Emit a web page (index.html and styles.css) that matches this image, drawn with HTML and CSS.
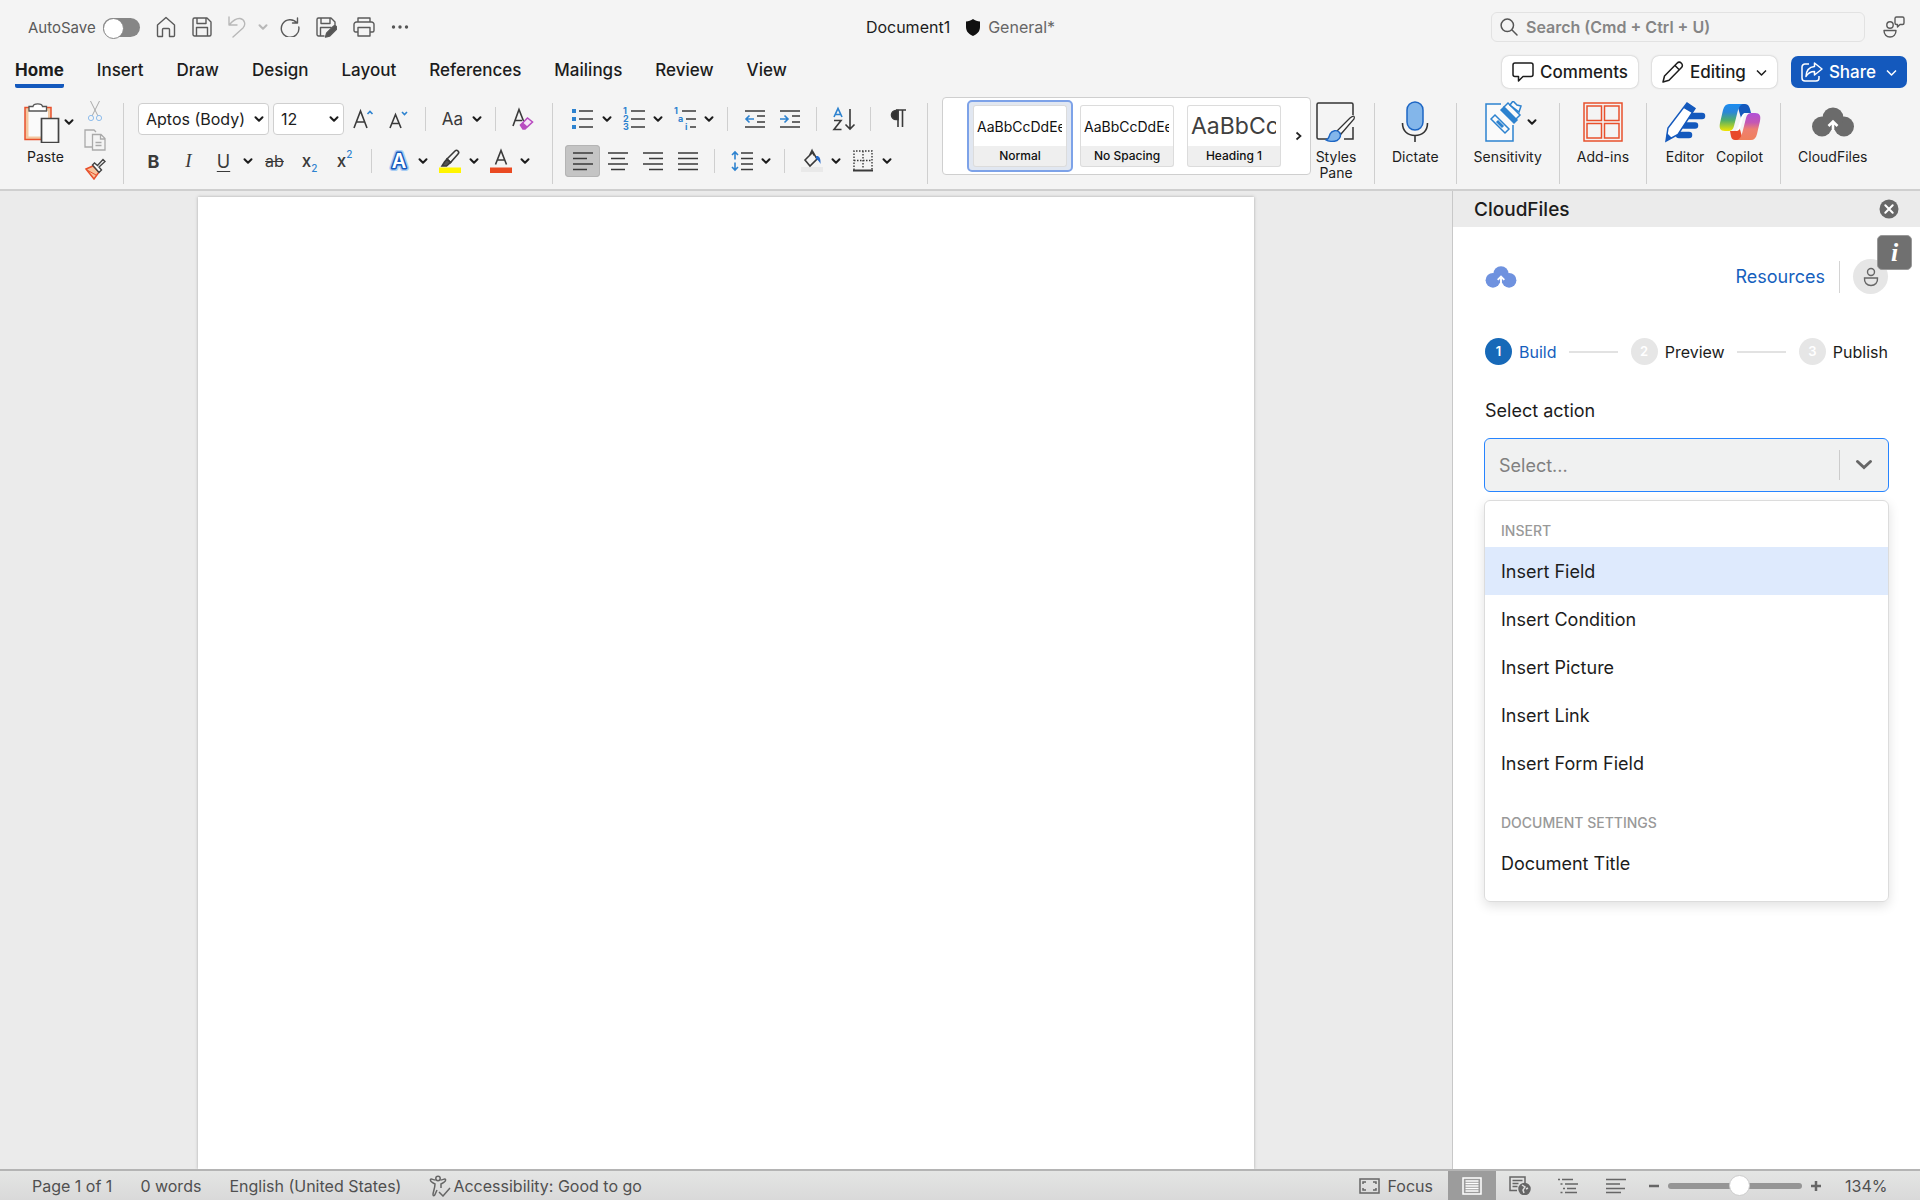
FILE: index.html
```html
<!DOCTYPE html>
<html lang="en">

<head>
    <meta charset="UTF-8">
    <meta name="viewport" content="width=device-width, initial-scale=1.0">
    <title>Document1</title>
    <link rel="stylesheet" href="styles.css">
</head>

<body>
    <svg class="defs" aria-hidden="true">
        <symbol id="caret" viewBox="0 0 10 10"><path d="M1.500 3.200 5 6.800 8.500 3.200" fill="none" stroke="currentColor" stroke-width="2" stroke-linecap="round" stroke-linejoin="round"/></symbol>
        <symbol id="cloud" viewBox="0 0 42 30">
            <g fill="currentColor"><circle cx="10" cy="19.500" r="10"/><circle cx="32" cy="19.500" r="10"/><circle cx="21" cy="11" r="10.500"/><rect x="12" y="12" width="18" height="11"/></g>
            <path class="cloud-arrow" d="M21 24V15M16.500 19 21 14.500 25.500 19" fill="none" stroke-width="2.600"/>
        </symbol>
    </svg>

    <header class="titlebar">
        <div class="quick">
            <label for="autosave">AutoSave</label>
            <input type="checkbox" id="autosave" class="toggle">
            <button aria-label="Home"><svg width="20" height="22" viewBox="0 0 20 22"><path d="M1.500 9 10 1.500 18.500 9v10.500a1 1 0 0 1-1 1h-4v-7a1 1 0 0 0-1-1h-5a1 1 0 0 0-1 1v7h-4a1 1 0 0 1-1-1z"/></svg></button>
            <button aria-label="Save"><svg width="20" height="20" viewBox="0 0 20 20"><path d="M1 2.500A1.500 1.500 0 0 1 2.500 1H15l4 4v12.500a1.500 1.500 0 0 1-1.500 1.500h-15A1.500 1.500 0 0 1 1 17.500zM5 1v5.500h9V1M4.500 19v-8.500h11V19"/></svg></button>
            <button aria-label="Undo" class="off"><svg width="18" height="22" viewBox="0 0 18 22"><path d="M1 1v8h8M1.500 8.500C5 4.500 8 2 12 2.500c5 .8 6 6.500 3 9.500L5 21"/></svg></button>
            <button aria-label="Undo history" class="off slim"><svg width="10" height="10"><use href="#caret"/></svg></button>
            <button aria-label="Redo"><svg width="20" height="20" viewBox="0 0 20 20"><path d="M17.500 1v5h-5M17 6A8.800 8.800 0 1 0 18.800 10"/></svg></button>
            <button aria-label="Save as"><svg width="21" height="21" viewBox="0 0 21 21"><path d="M8 19H2.500A1.500 1.500 0 0 1 1 17.500v-15A1.500 1.500 0 0 1 2.500 1H15l4 4v4M5 1v5.500h9V1M4.500 19v-8.500H15"/><path d="m9.500 20 1.200-4 6.500-6.500a2 2 0 0 1 3 3L13.700 19z" fill="#555"/></svg></button>
            <button aria-label="Print"><svg width="22" height="20" viewBox="0 0 22 20"><path d="M5 5V1h12v4M5 15H2.500A1.500 1.500 0 0 1 1 13.500v-6A2.500 2.500 0 0 1 3.500 5h15A2.500 2.500 0 0 1 21 7.500v6a1.500 1.500 0 0 1-1.500 1.500H17M5 10.500h12V19H5z"/></svg></button>
            <button aria-label="More"><svg width="18" height="6" viewBox="0 0 18 6"><g fill="#555" stroke="none"><circle cx="2.500" cy="3" r="1.700"/><circle cx="9" cy="3" r="1.700"/><circle cx="15.500" cy="3" r="1.700"/></g></svg></button>
        </div>
        <div class="doc-name">
            <span>Document1</span>
            <svg width="14" height="17" viewBox="0 0 14 17"><path d="M7 0c2 1.800 4.500 2.200 7 2.400V8c0 4.500-3 7.300-7 9-4-1.700-7-4.500-7-9V2.400C2.500 2.200 5 1.800 7 0z" fill="#111"/></svg>
            <span class="muted">General*</span>
        </div>
        <div class="find">
            <div class="search">
                <svg width="18" height="18" viewBox="0 0 18 18"><path d="m11.800 11.800 5.200 5.200M13.500 7.300a6.200 6.200 0 1 1-12.400 0 6.200 6.200 0 0 1 12.400 0z" fill="none" stroke="#555" stroke-width="1.500" stroke-linecap="round"/></svg>
                <input type="search" placeholder="Search (Cmd + Ctrl + U)" aria-label="Search">
            </div>
            <button aria-label="Feedback"><svg width="22" height="22" viewBox="0 0 22 22"><circle cx="7" cy="9" r="3.200"/><path d="M1 14.500h12c0 4-2.500 6.500-6 6.500s-6-2.500-6-6.500zM13.500 1h6A1.500 1.500 0 0 1 21 2.500V7a1.500 1.500 0 0 1-1.500 1.500H17L14.500 11V8.500h-1A1.500 1.500 0 0 1 12 7V2.500A1.500 1.500 0 0 1 13.500 1z"/></svg></button>
        </div>
    </header>

    <nav class="tabs">
        <a href="#" class="active">Home</a>
        <a href="#">Insert</a>
        <a href="#">Draw</a>
        <a href="#">Design</a>
        <a href="#">Layout</a>
        <a href="#">References</a>
        <a href="#">Mailings</a>
        <a href="#">Review</a>
        <a href="#">View</a>
        <div class="tab-actions">
            <button class="pill"><svg width="22" height="20" viewBox="0 0 22 20"><path d="M3 1h16a2 2 0 0 1 2 2v9.500a2 2 0 0 1-2 2h-8L6.500 19v-4.500H3a2 2 0 0 1-2-2V3a2 2 0 0 1 2-2z"/></svg>Comments</button>
            <button class="pill"><svg width="22" height="22" viewBox="0 0 22 22"><path d="m1 21 1.500-6L15 2.300a3 3 0 0 1 4.500 4.300L7 19.300zM13 4.500l4.500 4.500"/></svg>Editing<svg class="chev" width="11" height="11" viewBox="0 0 11 11"><path d="m1 3.500 4.500 4.500L10 3.500"/></svg></button>
            <button class="pill share"><svg width="22" height="20" viewBox="0 0 22 20"><path d="M8 2H4a3 3 0 0 0-3 3v11a3 3 0 0 0 3 3h11a3 3 0 0 0 3-3v-2M13.500 1 21 7l-7.500 6V9.500C9.500 9.500 7 11 5 14.500 5.200 9 8 5 13.500 4.500z"/></svg>Share<svg class="chev" width="11" height="11" viewBox="0 0 11 11"><path d="m1 3.500 4.500 4.500L10 3.500"/></svg></button>
        </div>
    </nav>

    <div class="ribbon">
        <section class="group clipboard">
            <button class="big">
                <span class="big-icon">
                    <svg width="38" height="42" viewBox="0 0 38 42"><path d="M3 6.500h26v32H3z" fill="#f3c7a0" stroke="#e8502c" stroke-width="1.500"/><path d="M6.500 10H26v25.500H6.500z" fill="#fafafa"/><path d="M7 10V5.500h4C11.500 2 20 2 20.500 5.500h4V10z" fill="#fff" stroke="#555" stroke-width="1.300"/><path d="M19.500 17.500h17v24h-17z" fill="#fafafa" stroke="#444" stroke-width="1.700"/></svg>
                    <svg width="10" height="10"><use href="#caret"/></svg>
                </span>
                Paste
            </button>
            <div class="clip-tools">
                <button aria-label="Cut"><svg width="16" height="22" viewBox="0 0 16 22"><path d="M3.500 1 11 16M12.500 1 5 16" stroke="#aaa"/><circle cx="4" cy="18" r="2.600" stroke="#8fbdec"/><circle cx="12" cy="18" r="2.600" stroke="#8fbdec"/></svg></button>
                <button aria-label="Copy"><svg width="22" height="22" viewBox="0 0 22 22"><path d="M8 18H1V1h9l2 2M8.500 5.500H17l4 4V21H8.500zM16.500 5.500V10H21M11.500 13.500h6M11.500 16.500h6" stroke="#aaa" stroke-width="1.300"/></svg></button>
                <button aria-label="Format painter"><svg width="22" height="22" viewBox="0 0 22 22"><path d="m2 11 7-3 6 6-5 7z" fill="#f6c39c" stroke="#e8502c" stroke-width="1.500"/><path d="m3 12 9 5" stroke="#e8502c"/><path d="m8.500 7 2-2 3 2.500L19 1.500l2 2-6 5.500 2.500 3-2.500 2.500z" fill="#fafafa" stroke="#444" stroke-width="1.400"/></svg></button>
            </div>
        </section>

        <section class="group">
            <div class="tool-rows">
                <div class="row">
                    <span class="combo font-name"><select aria-label="Font"><option>Aptos (Body)</option></select><svg width="10" height="10"><use href="#caret"/></svg></span>
                    <span class="combo font-size"><select aria-label="Font size"><option>12</option></select><svg width="10" height="10"><use href="#caret"/></svg></span>
                    <button class="tool" aria-label="Grow font"><svg width="21" height="22" viewBox="0 0 21 22"><path d="M1 20 7.500 3 14 20M3.500 14h8"/><path class="blue" d="m14.500 6 2.500-2.500L19.500 6"/></svg></button>
                    <button class="tool" aria-label="Shrink font"><svg width="21" height="22" viewBox="0 0 21 22"><path d="M2 20 7.500 6.500 13 20M4 15.500h7"/><path class="blue" d="m14 4 2.500 2.500L19 4"/></svg></button>
                    <i class="sep"></i>
                    <button class="tool case">Aa</button>
                    <button class="drop" aria-label="Case options"><svg width="10" height="10"><use href="#caret"/></svg></button>
                    <i class="sep"></i>
                    <button class="tool" aria-label="Clear formatting"><svg width="22" height="22" viewBox="0 0 22 22"><path d="M1 18 7 1.500 11.500 13M3 12.500h7"/><path d="m8.500 17 7-7 5 4-7.500 7H11z" fill="#f7e4f8" stroke="#b84cc0" stroke-width="1.600"/><path d="m8.500 17 2.500-2.500 4.500 4-2.500 2.500h-2z" fill="#b84cc0" stroke="none"/></svg></button>
                </div>
                <div class="row">
                    <button class="tool bold">B</button>
                    <button class="tool italic">I</button>
                    <button class="tool underline">U</button>
                    <button class="drop" aria-label="Underline options"><svg width="10" height="10"><use href="#caret"/></svg></button>
                    <button class="tool strike">ab</button>
                    <button class="tool script">x<sub>2</sub></button>
                    <button class="tool script">x<sup>2</sup></button>
                    <i class="sep"></i>
                    <button class="tool" aria-label="Text effects"><svg class="effects" width="22" height="22" viewBox="0 0 22 22"><text class="halo" x="11" y="18">A</text><text class="face" x="11" y="18" aria-hidden="true">A</text></svg></button>
                    <button class="drop" aria-label="Text effects options"><svg width="10" height="10"><use href="#caret"/></svg></button>
                    <button class="tool" aria-label="Highlight"><svg width="22" height="24" viewBox="0 0 22 24"><path d="M0 18.500h22V24H0z" fill="#fff500" stroke="none"/><path d="m8 10 8-8a2 2 0 0 1 3 3l-7.500 8.500z"/><path d="m8 10-2.500 3L3 17h4.500l4-3.500z" fill="#555"/></svg></button>
                    <button class="drop" aria-label="Highlight options"><svg width="10" height="10"><use href="#caret"/></svg></button>
                    <button class="tool" aria-label="Font color"><svg width="22" height="24" viewBox="0 0 22 24"><path d="M0 18.500h22V24H0z" fill="#ea4a22" stroke="none"/><path d="M5.500 15.500 11 1.500l5.500 14M7.500 11h7"/></svg></button>
                    <button class="drop" aria-label="Font color options"><svg width="10" height="10"><use href="#caret"/></svg></button>
                </div>
            </div>
        </section>

        <section class="group">
            <div class="tool-rows">
                <div class="row">
                    <button class="tool" aria-label="Bullets"><svg width="21" height="22" viewBox="0 0 21 22"><path d="M0 1h4v4H0zM0 9h4v4H0zM0 17h4v4H0z" fill="#2d82cf" stroke="none"/><path d="M7 3h14M7 11h14M7 19h14"/></svg></button>
                    <button class="drop" aria-label="Bullet options"><svg width="10" height="10"><use href="#caret"/></svg></button>
                    <button class="tool" aria-label="Numbering"><svg class="nums" width="22" height="22" viewBox="0 0 22 22"><text x="0" y="6">1</text><text x="0" y="14">2</text><text x="0" y="22">3</text><path d="M8 3h14M8 11h14M8 19h14"/></svg></button>
                    <button class="drop" aria-label="Numbering options"><svg width="10" height="10"><use href="#caret"/></svg></button>
                    <button class="tool" aria-label="Multilevel list"><svg class="nums" width="22" height="22" viewBox="0 0 22 22"><text x="0" y="6">1</text><text x="4" y="14">a</text><text x="11" y="22">i</text><path d="M8 3h14M12 11h10M16 19h6"/></svg></button>
                    <button class="drop" aria-label="Multilevel options"><svg width="10" height="10"><use href="#caret"/></svg></button>
                    <i class="sep"></i>
                    <button class="tool" aria-label="Decrease indent"><svg width="20" height="20" viewBox="0 0 20 20"><path d="M0 2h20M12 7h8M12 13h8M0 18h20"/><path class="blue" d="M9 10H1m3.500-3.500L1 10l3.500 3.500"/></svg></button>
                    <button class="tool" aria-label="Increase indent"><svg width="20" height="20" viewBox="0 0 20 20"><path d="M0 2h20M12 7h8M12 13h8M0 18h20"/><path class="blue" d="M0 10h8M4.500 6.500 8 10l-3.500 3.500"/></svg></button>
                    <i class="sep"></i>
                    <button class="tool" aria-label="Sort"><svg width="22" height="24" viewBox="0 0 22 24"><path class="blue" d="M1 10 5 1.500 9 10M2.500 7.500h5"/><path d="M1 13.500h7L1 22.500h7.500M17 2v20m-4.500-4.500L17 22l4.500-4.500"/></svg></button>
                    <i class="sep"></i>
                    <button class="tool pilcrow" aria-label="Show marks"><svg width="16" height="20" viewBox="0 0 16 20"><path d="M6 1h10M8 1v17M12.500 1v17"/><path d="M8 1.500v9H6A4.500 4.500 0 0 1 6 1.500z" fill="#333"/></svg></button>
                </div>
                <div class="row">
                    <button class="tool pressed" aria-label="Align left"><svg width="20" height="20" viewBox="0 0 20 20"><path d="M0 2h20M0 7.500h14M0 13h20M0 18.500h14"/></svg></button>
                    <button class="tool" aria-label="Center"><svg width="20" height="20" viewBox="0 0 20 20"><path d="M0 2h20M3 7.500h14M0 13h20M3 18.500h14"/></svg></button>
                    <button class="tool" aria-label="Align right"><svg width="20" height="20" viewBox="0 0 20 20"><path d="M0 2h20M6 7.500h14M0 13h20M6 18.500h14"/></svg></button>
                    <button class="tool" aria-label="Justify"><svg width="20" height="20" viewBox="0 0 20 20"><path d="M0 2h20M0 7.500h20M0 13h20M0 18.500h20"/></svg></button>
                    <i class="sep"></i>
                    <button class="tool" aria-label="Line spacing"><svg width="22" height="20" viewBox="0 0 22 20"><path class="blue" d="M4 1.500v7M1 4l3-3 3 3M4 11.500v7M1 16l3 3 3-3"/><path d="M10 2h12M10 7.500h12M10 13h12M10 18.500h12"/></svg></button>
                    <button class="drop" aria-label="Spacing options"><svg width="10" height="10"><use href="#caret"/></svg></button>
                    <i class="sep"></i>
                    <button class="tool" aria-label="Shading"><svg width="22" height="22" viewBox="0 0 22 22"><path d="M0 17h22v5H0z" fill="#e9e9e9" stroke="none"/><path d="m4 10 8-8 4 7-7 7zM8.500 5.500 11 .500l2 5"/><path d="M15 6c3-.5 5 2 4.500 8-1-2-2-4-4.500-5z" fill="#2468c8" stroke="none"/></svg></button>
                    <button class="drop" aria-label="Shading options"><svg width="10" height="10"><use href="#caret"/></svg></button>
                    <button class="tool" aria-label="Borders"><svg width="20" height="22" viewBox="0 0 20 22"><path d="M1 20V1h18v19M10 1v17M1 10.500h18" stroke-dasharray="1.500 1.500" stroke-width="1.400"/><path d="M0 20.500h20" stroke-width="2"/></svg></button>
                    <button class="drop" aria-label="Border options"><svg width="10" height="10"><use href="#caret"/></svg></button>
                </div>
            </div>
        </section>

        <section class="group styles">
            <div class="gallery">
                <button class="style selected"><span class="sample"><span>AaBbCcDdEe</span></span><span class="style-name">Normal</span></button>
                <button class="style"><span class="sample"><span>AaBbCcDdEe</span></span><span class="style-name">No Spacing</span></button>
                <button class="style"><span class="sample heading"><span>AaBbCc</span></span><span class="style-name">Heading 1</span></button>
                <button class="more" aria-label="More styles"><svg width="8" height="10" viewBox="0 0 8 10"><path d="m1.500 1.500 4 3.500-4 3.500" fill="none" stroke="#222" stroke-width="1.700"/></svg></button>
            </div>
            <button class="big">
                <span class="big-icon"><svg width="42" height="42" viewBox="0 0 42 42"><path d="M14 38H3.500A1.500 1.500 0 0 1 2 36.500v-33A1.500 1.500 0 0 1 3.500 2h33A1.500 1.500 0 0 1 38 3.500V14M38 26v12H29" fill="none" stroke="#333" stroke-width="1.500"/><path d="m22 30 13-13c4-3 5-2 4 1L26 33z" fill="#fafafa" stroke="#333" stroke-width="1.300"/><path d="M11 39c3-1 3-3 4-6 2-4 7-4 9-2 3 3 1 7-2 8.500-4 1.500-9 1-11-.500z" fill="#83b6ea" stroke="#1d66c4" stroke-width="1.400"/></svg></span>
                Styles<br>Pane
            </button>
        </section>

        <section class="group wide">
            <button class="big">
                <span class="big-icon"><svg width="28" height="42" viewBox="0 0 28 42"><rect x="6" y="1" width="16" height="28" rx="8" fill="#83b6ea" stroke="#1d66c4" stroke-width="1.500"/><path d="M1.500 22c0 8 5 12.500 12.500 12.500S26.500 30 26.500 22M14 34.500V41" fill="none" stroke="#333" stroke-width="1.600"/></svg></span>
                Dictate
            </button>
        </section>
        <section class="group wide">
            <button class="big">
                <span class="big-icon sensitivity"><svg width="38" height="42" viewBox="0 0 38 42"><g fill="#fafafa" stroke="#2d82cf" stroke-width="1.500"><path d="M16 3H1v37h27V24"/><path d="m6 18 4-4 14 14-4 4z"/><path d="m12 20 6 6" stroke-width="3"/><path d="m16 9 3-3 13 13-3 3z" fill="#2d82cf"/><path d="m19 6 4-4 12 12-4 4z"/><path d="m25 4 3-4 4 4 4 1-2 6z"/></g></svg><svg width="10" height="10"><use href="#caret"/></svg></span>
                Sensitivity
            </button>
        </section>
        <section class="group wide">
            <button class="big">
                <span class="big-icon"><svg width="40" height="42" viewBox="0 0 40 42"><path d="M1 2h38v38H1zM4 5h14.500v14.500H4zM21.500 5H36v14.500H21.500zM4 22.500h14.500V37H4zM21.500 22.500H36V37H21.500z" fill="none" stroke="#e8502c" stroke-width="1.500"/></svg></span>
                Add-ins
            </button>
        </section>
        <section class="group wide">
            <button class="big">
                <span class="big-icon"><svg width="42" height="42" viewBox="0 0 42 42"><path d="M25 15h13M20 24.500h11M15 34h10" stroke="#1459bd" stroke-width="6.500" stroke-linecap="round"/><path d="m2 40 2-13L23 2l8 5.500-17 26z" fill="#fff" stroke="#1459bd" stroke-width="1.500"/><path d="m23 2 8 5.500-3 4.500-8.500-5zM2 40l1-8 5 5z" fill="#1459bd"/></svg></span>
                Editor
            </button>
            <button class="big">
                <span class="big-icon"><svg width="42" height="42" viewBox="0 0 42 42">
                    <defs>
                        <linearGradient id="cp1" x1="0" y1="0" x2="0" y2="1"><stop offset="0" stop-color="#1b8cf0"/><stop offset=".3" stop-color="#2a86d8"/><stop offset=".6" stop-color="#4fae6a"/><stop offset="1" stop-color="#f2e500"/></linearGradient>
                        <linearGradient id="cp2" x1="0" y1="0" x2="0" y2="1"><stop offset="0" stop-color="#b050d8"/><stop offset=".35" stop-color="#c457b4"/><stop offset=".6" stop-color="#ee7f70"/><stop offset="1" stop-color="#f0805c"/></linearGradient>
                    </defs>
                    <path d="M18 3h8c4 0 5 4 6 9h-5c-3 0-4 2-5 5z" fill="#1459bd"/>
                    <path d="M24 39h-8c-4 0-4-4-5-9h4c3 0 4-2 5-5z" fill="#e8482a"/>
                    <path d="M10 3h14c-4 1-5 6-6 10l-3 12c-1 4-3 5-6 5H6c-5 0-6-3-5-8L4 9c1-4 3-6 6-6z" fill="url(#cp1)"/>
                    <path d="M32 39H18c4-1 5-6 6-10l3-12c1-4 3-5 6-5h3c5 0 6 3 5 8l-3 13c-1 4-3 6-6 6z" fill="url(#cp2)"/>
                    <path d="M27 12c-3 0-4 2-5 5l-3 9c-1 2-2 4-4 4h2c3 0 4-2 5-5l2-8c1-3 2-5 5-5z" fill="#fff"/>
                </svg></span>
                Copilot
            </button>
        </section>
        <section class="group wide">
            <button class="big">
                <span class="big-icon cloud-gray"><svg width="42" height="30"><use href="#cloud"/></svg></span>
                CloudFiles
            </button>
        </section>
    </div>

    <main class="workspace">
        <div class="canvas">
            <div class="page"></div>
        </div>
        <aside class="pane">
            <div class="pane-title">
                <h2>CloudFiles</h2>
                <button aria-label="Close"><svg width="20" height="20" viewBox="0 0 20 20"><circle cx="10" cy="10" r="9.500" fill="#686868"/><path d="m6.300 6.300 7.400 7.400m0-7.400-7.400 7.400" stroke="#fff" stroke-width="2" stroke-linecap="round"/></svg></button>
            </div>
            <div class="pane-body">
                <button class="info" aria-label="Info">i</button>
                <div class="brand">
                    <svg class="logo" width="32" height="22"><use href="#cloud"/></svg>
                    <a href="#">Resources</a>
                    <button class="avatar" aria-label="Account"><svg width="16" height="20" viewBox="0 0 16 20"><circle cx="8" cy="5" r="3.500"/><path d="M1.500 11h13c.5 4.500-2.500 7.500-6.500 7.500S1 15.500 1.500 11z"/></svg></button>
                </div>
                <ol class="steps">
                    <li class="current"><b>1</b>Build</li>
                    <li class="line"></li>
                    <li><b>2</b>Preview</li>
                    <li class="line"></li>
                    <li><b>3</b>Publish</li>
                </ol>
                <label for="action">Select action</label>
                <div class="select-box">
                    <input type="text" id="action" role="combobox" aria-expanded="true" aria-controls="action-menu" placeholder="Select...">
                    <button aria-label="Toggle menu"><svg width="18" height="12" viewBox="0 0 18 12"><path d="m2.500 2.500 6.500 6 6.500-6" fill="none" stroke="#666" stroke-width="3" stroke-linecap="round"/></svg></button>
                </div>
                <div class="menu" id="action-menu" role="listbox">
                    <h3>INSERT</h3>
                    <button role="option" class="focused">Insert Field</button>
                    <button role="option">Insert Condition</button>
                    <button role="option">Insert Picture</button>
                    <button role="option">Insert Link</button>
                    <button role="option">Insert Form Field</button>
                    <h3>DOCUMENT SETTINGS</h3>
                    <button role="option">Document Title</button>
                </div>
            </div>
        </aside>
    </main>

    <footer class="status">
        <span>Page 1 of 1</span>
        <span>0 words</span>
        <span>English (United States)</span>
        <span class="access"><svg width="22" height="22" viewBox="0 0 22 22"><circle cx="9" cy="3.500" r="2.200"/><path d="M6.500 5C4 5 2 3 1.500 4.500S4 8 6 9c0 4-2 8-2 10.500 0 1.500 1.500 1.500 2 0L8 15M11.500 5c2.500 0 4.500-2 5-.500S14 8 12 9v4M10 17l4 4 7-8"/></svg>Accessibility: Good to go</span>
        <div class="views">
            <button class="focus"><svg width="21" height="16" viewBox="0 0 21 16"><path d="M1 1h19v14H1zM4 6V4h3M14 4h3v2M17 10v2h-3M7 12H4v-2"/></svg>Focus</button>
            <button class="view on" aria-label="Print layout"><svg width="20" height="18" viewBox="0 0 20 18"><path d="M1 1h18v16H1zM3.500 4h13M3.500 6.500h13M3.500 9h13M3.500 11.500h13M3.500 14h13"/></svg></button>
            <button class="view" aria-label="Web layout"><svg width="22" height="19" viewBox="0 0 22 19"><path d="M8 14.500H1V1h15v6M3.500 4.500h10M3.500 7.500h6M3.500 10.500h5"/><circle cx="15.500" cy="13" r="5.500" fill="#666"/><path d="m13 9 3 2-2 3 1 3M17 13l2-1" stroke="#ddd"/></svg></button>
            <button class="view" aria-label="Outline"><svg width="20" height="16" viewBox="0 0 20 16"><path d="M0 1.500h2M4 1.500h11M2.500 6h2M7 6h13M5 10.500h2M9 10.500h9M2.500 14.500h2M7 14.500h12"/></svg></button>
            <button class="view" aria-label="Draft"><svg width="20" height="16" viewBox="0 0 20 16"><path d="M0 1.500h20M0 6h14M0 10.500h19M0 14.500h15"/></svg></button>
            <button class="zoom-step" aria-label="Zoom out"><svg width="12" height="12" viewBox="0 0 12 12"><path d="M1 6h10" stroke-width="2.500"/></svg></button>
            <input type="range" min="0" max="100" value="54" aria-label="Zoom">
            <button class="zoom-step" aria-label="Zoom in"><svg width="12" height="12" viewBox="0 0 12 12"><path d="M1 6h10M6 1v10" stroke-width="2.500"/></svg></button>
            <span class="zoom">134%</span>
        </div>
    </footer>
</body>

</html>
```

FILE: styles.css
```css
* {
    box-sizing: border-box;
}

body {
    display: flex;
    flex-direction: column;
    height: 100vh;
    margin: 0;
    background-color: #f4f4f4;
    color: #1c1c1c;
    font-family: Inter, "Liberation Sans", sans-serif;
    font-size: 16px;
    overflow: hidden;
}

button,
input,
select {
    padding: 0;
    border: 0;
    background: none;
    color: inherit;
    font: inherit;
}

a {
    color: inherit;
    text-decoration: none;
}

svg {
    flex: none;
}

button {
    display: flex;
    align-items: center;
    justify-content: center;
}

.defs {
    position: absolute;
    width: 0;
    height: 0;
}

.cloud-arrow {
    stroke: #fff;
}

/* title bar */
.titlebar {
    display: grid;
    grid-template-columns: 1fr auto 1fr;
    align-items: center;
    height: 54px;
    padding: 0 15px 0 28px;
}

.titlebar svg {
    stroke-linejoin: round;
    stroke-linecap: round;
}

.quick,
.doc-name,
.find,
.search {
    display: flex;
    align-items: center;
}

.quick {
    gap: 16px;
    color: #5a5a5a;
    font-size: 15px;
}

.quick button svg,
.find button svg {
    fill: none;
    stroke: #5a5a5a;
    stroke-width: 1.4px;
}

.quick .off {
    color: #b8b8b8;
}

.quick .off svg {
    stroke: #b8b8b8;
}

.quick .slim {
    margin: 0 -4px;
}

.toggle {
    appearance: none;
    width: 37px;
    height: 19px;
    margin: 0 0 0 -9px;
    border-radius: 10px;
    background-color: #868686;
}

.toggle::before {
    content: "";
    display: block;
    width: 19px;
    height: 19px;
    border: 1px solid #868686;
    border-radius: 50%;
    background-color: #fff;
}

.doc-name {
    gap: 8px;
    padding-right: 12px;
}

.doc-name span:first-child {
    margin-right: 8px;
}

.muted {
    color: #666;
}

.find {
    justify-content: flex-end;
    gap: 18px;
}

.search {
    gap: 8px;
    width: 374px;
    height: 30px;
    padding: 0 8px;
    border: 1px solid #e2e2e2;
    border-radius: 6px;
}

.search input {
    flex: 1;
    font-weight: 600;
}

.search input::placeholder {
    color: #858585;
}

/* tabs */
.tabs {
    display: flex;
    gap: 33px;
    height: 42px;
    padding: 0 13px 0 15px;
    font-size: 17px;
    font-weight: 500;
    line-height: 32px;
}

.tabs > a {
    height: 34px;
    border-bottom: 4px solid transparent;
}

.tabs .active {
    border-color: #1459bd;
    border-radius: 2px;
    font-weight: 700;
}

.tab-actions {
    display: flex;
    gap: 14px;
    margin-left: auto;
}

.pill {
    gap: 6px;
    height: 32px;
    margin-top: 2px;
    padding: 0 10px;
    border-radius: 7px;
    background-color: #fff;
    box-shadow: 0 0 2px #aaa;
}

.pill svg {
    fill: none;
    stroke: currentColor;
    stroke-width: 1.5px;
    stroke-linejoin: round;
}

.pill .chev {
    margin-left: 4px;
}

.share {
    background-color: #1459bd;
    box-shadow: none;
    color: #fff;
}

/* ribbon */
.ribbon {
    display: flex;
    height: 95px;
    padding: 7px 0 5px;
    border-bottom: 2px solid #cfcfcf;
}

.group {
    display: flex;
    flex: none;
    padding: 0 12px;
    border-right: 1px solid #cfcfcf;
}

.group:last-child {
    border: 0;
}

.group.wide {
    gap: 10px;
    padding: 0 17px;
}

.clipboard {
    gap: 10px;
    width: 124px;
    padding: 0 0 0 22px;
}

.clip-tools {
    display: flex;
    flex-direction: column;
    align-items: center;
    gap: 7px;
    margin-top: -3px;
}

.clip-tools svg {
    fill: none;
}

.big {
    flex-direction: column;
    justify-content: flex-start;
    font-size: 14px;
    line-height: 16px;
}

.big-icon {
    display: flex;
    align-items: center;
    gap: 4px;
    height: 42px;
    margin: -2px 0 6px;
}

.clipboard .big {
    align-items: flex-start;
    text-indent: 5px;
}

.sensitivity {
    padding-left: 6px;
}

.cloud-gray {
    color: #6b6b6b;
}

.tool-rows {
    display: flex;
    flex-direction: column;
    gap: 10px;
}

.row {
    display: flex;
    align-items: center;
    height: 32px;
}

.tool {
    width: 35px;
    height: 32px;
    border-radius: 4px;
    font-size: 19px;
    color: #3a3a3a;
}

.tool svg {
    fill: none;
    stroke: #3a3a3a;
    stroke-width: 1.6px;
    overflow: visible;
}

.tool .blue {
    stroke: #2d82cf;
}

.nums text {
    fill: #2d82cf;
    stroke: none;
    font-size: 9px;
    font-weight: 700;
}

.drop {
    width: 16px;
    height: 32px;
    padding-right: 3px;
}

.sep {
    width: 1px;
    height: 24px;
    margin: 0 9px;
    background-color: #cfcfcf;
}

.pressed {
    background-color: #c4c4c4;
    box-shadow: inset 0 0 0 1px #b4b4b4;
}

.combo {
    display: grid;
    align-items: center;
    height: 32px;
    margin: 0 2px;
    border: 1px solid #cfcfcf;
    border-radius: 4px;
    background-color: #fff;
}

.combo select {
    grid-area: 1 / 1;
    appearance: none;
    width: 100%;
    height: 30px;
    padding-left: 7px;
}

.combo svg {
    grid-area: 1 / 1;
    justify-self: end;
    margin-right: 4px;
    pointer-events: none;
}

.font-name {
    width: 131px;
}

.font-size {
    width: 71px;
}

.case {
    font-size: 17px;
}

.bold {
    font-size: 18px;
    font-weight: 700;
}

.italic {
    font-family: "Liberation Serif", serif;
    font-style: italic;
}

.underline {
    font-size: 18px;
    text-decoration: underline;
    text-underline-offset: 3px;
}

.strike {
    font-size: 16px;
    text-decoration: line-through;
}

.script {
    font-size: 17px;
    font-weight: 500;
}

.script sub,
.script sup {
    color: #2d82cf;
    font-size: 10px;
}

.script sub {
    padding-top: 14px;
}

.script sup {
    padding-bottom: 14px;
}

.effects text {
    font-size: 20px;
    font-weight: 600;
    text-anchor: middle;
    paint-order: stroke;
    stroke-linejoin: round;
}

.effects .halo {
    stroke: #a9cdf3;
    stroke-width: 6px;
}

.effects .face {
    fill: #fff;
    stroke: #1459bd;
    stroke-width: 3px;
}

/* style gallery */
.styles {
    gap: 4px;
    padding: 0 17px 0 14px;
}

.gallery {
    display: flex;
    align-items: center;
    gap: 1px;
    width: 369px;
    height: 78px;
    margin-top: -6px;
    padding-left: 24px;
    border: 1px solid #cfcfcf;
    border-radius: 4px;
    background-color: #fff;
}

.style {
    flex-direction: column;
    width: 106px;
    height: 72px;
    padding: 4px 5px;
    border: 1px solid transparent;
    border-radius: 5px;
    color: #111;
}

.style.selected {
    border: 2px solid #7da2e8;
    padding: 3px 4px;
    background-color: #e1e7f1;
}

.sample,
.style-name {
    flex: none;
    width: 100%;
    border: 1px solid #dcdcdc;
}

.sample {
    height: 41px;
    padding: 0 4px 0 3px;
    border-bottom: 0;
    border-radius: 3px 3px 0 0;
    background-color: #fff;
    font-size: 14px;
    line-height: 41px;
    text-align: left;
}

.sample span {
    display: block;
    overflow: hidden;
}

.sample.heading {
    color: #404040;
    font-size: 23px;
    line-height: 40px;
}

.style-name {
    height: 21px;
    border-top: 0;
    border-radius: 0 0 3px 3px;
    background-color: #efefef;
    font-size: 12px;
    font-weight: 500;
    line-height: 20px;
}

.more {
    flex: 1;
    height: 72px;
}

/* document and task pane */
.workspace {
    display: flex;
    flex: 1;
    min-height: 0;
}

.canvas {
    display: flex;
    flex: 1;
    justify-content: center;
    padding-top: 6px;
    background-color: #ebebeb;
}

.page {
    width: 1056px;
    background-color: #fff;
    box-shadow: 0 0 3px #aaa;
}

.pane {
    width: 468px;
    border-left: 1px solid #c8c8c8;
    background-color: #fff;
}

.pane-title {
    display: flex;
    align-items: center;
    justify-content: space-between;
    height: 36px;
    padding: 0 21px;
    background-color: #ebebeb;
}

.pane-title h2 {
    margin: 0;
    font-size: 19px;
    font-weight: 500;
}

.pane-body {
    position: relative;
    padding: 32px 31px 0;
    font-size: 18px;
}

.info {
    position: absolute;
    top: 8px;
    right: 8px;
    width: 35px;
    height: 35px;
    border: 1px solid #999;
    border-radius: 5px;
    background-color: #707070;
    color: #fff;
    font: italic 700 26px "Liberation Serif", serif;
}

.brand {
    display: flex;
    align-items: center;
    height: 35px;
    padding: 0 1px;
}

.logo {
    color: #6f92df;
}

.brand a {
    margin-left: auto;
    padding-right: 14px;
    border-right: 1px solid #d4d4d4;
    color: #1560bd;
    line-height: 32px;
}

.avatar {
    width: 35px;
    height: 35px;
    margin-left: 13px;
    border-radius: 50%;
    background-color: #e6e6e6;
}

.avatar svg {
    fill: none;
    stroke: #666;
    stroke-width: 1.4px;
}

.steps {
    display: flex;
    align-items: center;
    justify-content: space-between;
    margin: 44px 0 34px;
    padding: 0 1px;
    font-size: 16px;
    list-style: none;
}

.steps li {
    display: flex;
    align-items: center;
    gap: 7px;
}

.steps b {
    width: 27px;
    height: 27px;
    border-radius: 50%;
    background-color: #e6e6e6;
    color: #fff;
    font-size: 13px;
    font-weight: 600;
    line-height: 27px;
    text-align: center;
}

.steps .current {
    color: #1560bd;
}

.steps .current b {
    background-color: #1769b8;
}

.steps .line {
    width: 49px;
    height: 2px;
    background-color: #e2e2e2;
}

.pane-body > label {
    display: block;
    padding: 0 1px;
    line-height: 24px;
}

.select-box {
    display: flex;
    align-items: center;
    height: 54px;
    margin-top: 15px;
    border: 1px solid #2684ff;
    border-radius: 6px;
    background-color: #f0f1f1;
}

.select-box input {
    flex: 1;
    min-width: 0;
    padding-left: 14px;
    outline: 0;
}

.select-box input::placeholder {
    color: #808080;
}

.select-box button {
    width: 49px;
    height: 30px;
    border-left: 1px solid #ccc;
}

.menu {
    margin-top: 8px;
    padding: 14px 0;
    border: 1px solid #dcdcdc;
    border-radius: 6px;
    box-shadow: 0 4px 12px rgba(0, 0, 0, 0.12);
}

.menu h3 {
    margin: 0;
    padding: 0 16px;
    color: #999;
    font-size: 14px;
    font-weight: 500;
    line-height: 32px;
}

.menu button + h3 {
    padding-top: 20px;
}

.menu button {
    justify-content: flex-start;
    width: 100%;
    height: 48px;
    padding: 0 16px;
}

.menu .focused {
    background-color: #deeafd;
}

/* status bar */
.status {
    display: flex;
    align-items: center;
    gap: 28px;
    height: 31px;
    padding-left: 32px;
    border-top: 2px solid #b4b4b4;
    background: linear-gradient(#e4e5e4, #d9d9d9);
    color: #505050;
}

.status svg {
    fill: none;
    stroke: #666;
    stroke-width: 1.5px;
}

.access,
.views,
.focus {
    display: flex;
    align-items: center;
}

.access {
    gap: 2px;
}

.views {
    height: 29px;
    margin-left: auto;
}

.focus {
    gap: 8px;
    margin-right: 15px;
}

.view {
    width: 48px;
    height: 29px;
}

.view.on {
    background-color: #9c9c9c;
}

.view.on svg {
    stroke: #fff;
}

.zoom-step {
    width: 28px;
    height: 29px;
}

.views input {
    appearance: none;
    width: 134px;
    height: 6px;
    margin: 0;
    border-radius: 3px;
    background-color: #959595;
}

.views input::-webkit-slider-thumb {
    appearance: none;
    width: 21px;
    height: 21px;
    border: 1px solid #ccc;
    border-radius: 50%;
    background-color: #fff;
}

.zoom {
    width: 90px;
    padding-left: 15px;
}
```
